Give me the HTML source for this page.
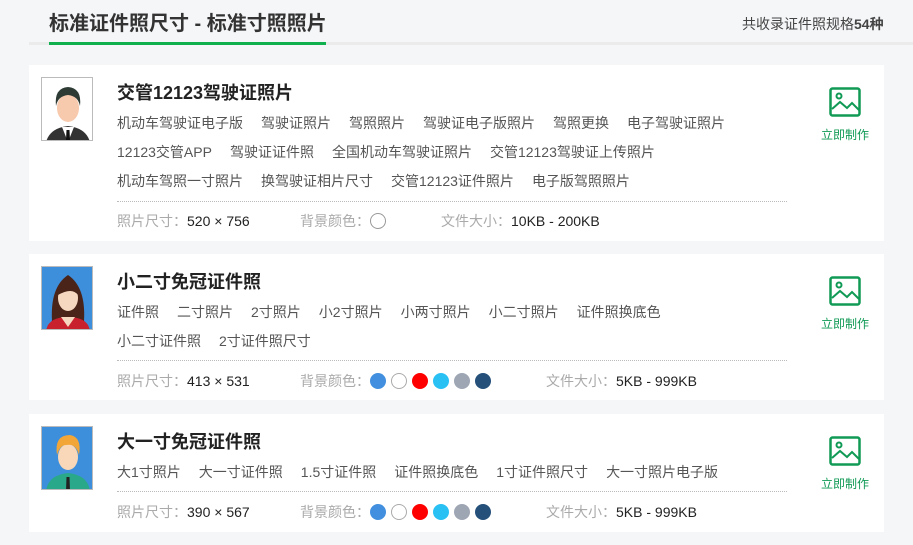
<!DOCTYPE html>
<html><head><meta charset="utf-8"><style>
*{margin:0;padding:0;box-sizing:border-box}
body{width:913px;height:545px;background:#f5f6f8;font-family:"Liberation Sans","Noto Sans CJK SC",sans-serif;position:relative;overflow:hidden;color:#333}
.h1{position:absolute;left:49px;top:7px;font-size:20px;font-weight:bold;color:#333;white-space:nowrap}
.gl{position:absolute;left:29px;top:42px;width:884px;height:3px;background:#ebebeb}
.gg{position:absolute;left:49px;top:42px;width:277px;height:3px;background:#10b04f}
.cnt{position:absolute;left:742px;top:14px;font-size:14px;color:#444;white-space:nowrap}
.card{position:absolute;left:29px;width:855px;background:#fff}
.av{position:absolute;left:12px;top:12px;width:52px;height:64px;border:1px solid #bbb;overflow:hidden}
.t{position:absolute;left:88px;font-size:18px;font-weight:bold;color:#222;white-space:nowrap}
.tags{position:absolute;left:88px;font-size:14px;color:#555;line-height:29px;white-space:nowrap}
.tags span{margin-right:18px}
.dot{position:absolute;left:88px;width:670px;border-top:1px dotted #bbb}
.info{position:absolute;font-size:14px;color:#222;white-space:nowrap}
.info i{font-style:normal;color:#aaa}
.c{display:inline-block;width:16px;height:16px;border-radius:50%;vertical-align:-3px;margin-right:5px}
.btn{position:absolute;left:791px;width:50px;text-align:center;font-size:12px;color:#109a55}
</style></head><body>
<div class="h1">标准证件照尺寸 - 标准寸照照片</div>
<div class="gl"></div><div class="gg"></div>
<div class="cnt">共收录证件照规格<b>54种</b></div>

<div class="card" style="top:65px;height:176px">
<div class="av" style="background:#fff"><svg width="52" height="64" viewBox="0 0 52 64"><path d="M4 64 Q8 50 26 48 Q44 50 48 64Z" fill="#333"/><path d="M20 49 L26 64 L32 49Z" fill="#fff"/><path d="M24.5 52 L27.5 52 L28 62 L26 64 L24 62Z" fill="#111"/><ellipse cx="26" cy="30" rx="11" ry="14" fill="#f7c9ad"/><path d="M14 28 Q12 10 26 9 Q40 10 38 28 Q36 18 26 17 Q16 18 14 28Z" fill="#2e3b35"/></svg></div>
<div class="t" style="top:14px">交管12123驾驶证照片</div>
<div class="tags" style="top:44px"><span>机动车驾驶证电子版</span><span>驾驶证照片</span><span>驾照照片</span><span>驾驶证电子版照片</span><span>驾照更换</span><span>电子驾驶证照片</span><br><span>12123交管APP</span><span>驾驶证证件照</span><span>全国机动车驾驶证照片</span><span>交管12123驾驶证上传照片</span><br><span>机动车驾照一寸照片</span><span>换驾驶证相片尺寸</span><span>交管12123证件照片</span><span>电子版驾照照片</span></div>
<div class="dot" style="top:136px"></div>
<div class="info" style="top:146px;left:88px"><i>照片尺寸：</i>520 × 756</div>
<div class="info" style="top:146px;left:271px"><i>背景颜色：</i><span class="c" style="border:1px solid #999"></span></div>
<div class="info" style="top:146px;left:412px"><i>文件大小：</i>10KB - 200KB</div>
<div class="btn" style="top:22px"><svg width="32" height="30" viewBox="0 0 32 30"><rect x="1.5" y="1.5" width="29" height="27" rx="2" fill="none" stroke="#109a55" stroke-width="2.5"/><circle cx="10" cy="9" r="2.5" fill="none" stroke="#109a55" stroke-width="2"/><path d="M3 22 L11 15 L18 21 L23 16 L30 23" fill="none" stroke="#109a55" stroke-width="2"/></svg><div style="margin-top:6px">立即制作</div></div>
</div>

<div class="card" style="top:254px;height:146px">
<div class="av" style="background:#3d8fdc"><svg width="52" height="64" viewBox="0 0 52 64"><path d="M10 54 Q8 20 26 8 Q44 20 42 54Z" fill="#4a2418"/><path d="M4 64 Q6 50 26 50 Q46 50 48 64Z" fill="#c8202c"/><path d="M19 50 L26 60 L33 50Z" fill="#f6d8c0"/><ellipse cx="26" cy="31" rx="10" ry="13" fill="#f6d8c0"/><path d="M16 28 Q18 15 28 16 Q34 18 36 28 Q30 20 16 28Z" fill="#4a2418"/></svg></div>
<div class="t" style="top:14px">小二寸免冠证件照</div>
<div class="tags" style="top:44px"><span>证件照</span><span>二寸照片</span><span>2寸照片</span><span>小2寸照片</span><span>小两寸照片</span><span>小二寸照片</span><span>证件照换底色</span><br><span>小二寸证件照</span><span>2寸证件照尺寸</span></div>
<div class="dot" style="top:106px"></div>
<div class="info" style="top:117px;left:88px"><i>照片尺寸：</i>413 × 531</div>
<div class="info" style="top:117px;left:271px"><i>背景颜色：</i><span class="c" style="background:#418fde"></span><span class="c" style="border:1px solid #aaa"></span><span class="c" style="background:#f00"></span><span class="c" style="background:#29c0f4"></span><span class="c" style="background:#9ea6b4"></span><span class="c" style="background:#24507a"></span></div>
<div class="info" style="top:117px;left:517px"><i>文件大小：</i>5KB - 999KB</div>
<div class="btn" style="top:22px"><svg width="32" height="30" viewBox="0 0 32 30"><rect x="1.5" y="1.5" width="29" height="27" rx="2" fill="none" stroke="#109a55" stroke-width="2.5"/><circle cx="10" cy="9" r="2.5" fill="none" stroke="#109a55" stroke-width="2"/><path d="M3 22 L11 15 L18 21 L23 16 L30 23" fill="none" stroke="#109a55" stroke-width="2"/></svg><div style="margin-top:6px">立即制作</div></div>
</div>

<div class="card" style="top:414px;height:118px">
<div class="av" style="background:#3d8fdc"><svg width="52" height="64" viewBox="0 0 52 64"><path d="M4 64 Q6 48 26 46 Q46 48 48 64Z" fill="#2aa88a"/><path d="M24.5 50 L27.5 50 L28 64 L24 64Z" fill="#222"/><ellipse cx="26" cy="30" rx="10" ry="13" fill="#f8d8b8"/><path d="M15 28 Q12 8 28 8 Q40 10 37 28 Q34 16 24 18 Q18 18 15 28Z" fill="#f2a637"/></svg></div>
<div class="t" style="top:14px">大一寸免冠证件照</div>
<div class="tags" style="top:44px"><span>大1寸照片</span><span>大一寸证件照</span><span>1.5寸证件照</span><span>证件照换底色</span><span>1寸证件照尺寸</span><span>大一寸照片电子版</span></div>
<div class="dot" style="top:77px"></div>
<div class="info" style="top:88px;left:88px"><i>照片尺寸：</i>390 × 567</div>
<div class="info" style="top:88px;left:271px"><i>背景颜色：</i><span class="c" style="background:#418fde"></span><span class="c" style="border:1px solid #aaa"></span><span class="c" style="background:#f00"></span><span class="c" style="background:#29c0f4"></span><span class="c" style="background:#9ea6b4"></span><span class="c" style="background:#24507a"></span></div>
<div class="info" style="top:88px;left:517px"><i>文件大小：</i>5KB - 999KB</div>
<div class="btn" style="top:22px"><svg width="32" height="30" viewBox="0 0 32 30"><rect x="1.5" y="1.5" width="29" height="27" rx="2" fill="none" stroke="#109a55" stroke-width="2.5"/><circle cx="10" cy="9" r="2.5" fill="none" stroke="#109a55" stroke-width="2"/><path d="M3 22 L11 15 L18 21 L23 16 L30 23" fill="none" stroke="#109a55" stroke-width="2"/></svg><div style="margin-top:6px">立即制作</div></div>
</div>
</body></html>
